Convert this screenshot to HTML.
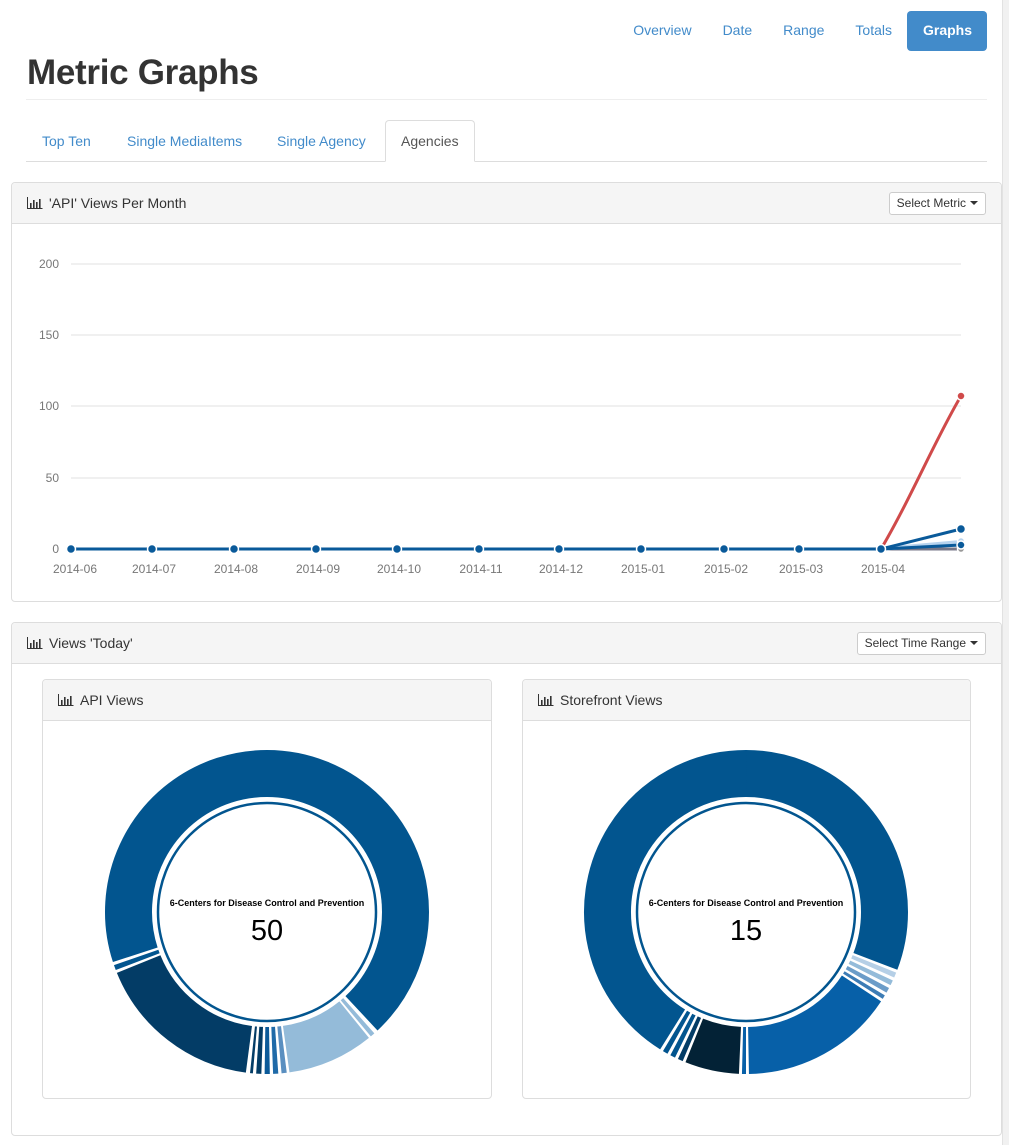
<!DOCTYPE html>
<html><head><meta charset="utf-8">
<style>
*{box-sizing:border-box}
body{margin:0;width:1009px;height:1145px;overflow:hidden;background:#fff;font-family:"Liberation Sans",Arial,sans-serif;color:#333;position:relative}
.sb{position:absolute;right:0;top:0;width:7px;height:1145px;background:#f1f1f1;border-left:1px solid #e2e2e2}
.nav{position:absolute;top:11px;right:22px;display:flex;font-size:14px}
.nav a{display:block;padding:11px 15px 11px 16px;color:#428bca;text-decoration:none;border-radius:4px;height:40px}
.nav a.act{background:#428bca;color:#fff;font-weight:bold}
h1{position:absolute;left:27px;top:53px;margin:0;font-size:35px;font-weight:bold;color:#333;letter-spacing:-0.3px}
.hr{position:absolute;left:26px;right:22px;top:99px;border-top:1px solid #eee}
.tabs{position:absolute;left:26px;right:22px;top:120px;height:42px;border-bottom:1px solid #ddd;font-size:14px}
.tabs a{position:absolute;top:0;height:42px;line-height:42px;color:#428bca;padding:0 15px;text-decoration:none}
.tabs a.act{color:#555;background:#fff;border:1px solid #ddd;border-bottom-color:#fff;border-radius:4px 4px 0 0;height:42px;line-height:40px}
.panel{position:absolute;border:1px solid #ddd;border-radius:4px;background:#fff}
.ph{background:#f5f5f5;border-bottom:1px solid #ddd;height:41px;padding:0 15px;font-size:14px;line-height:40px;border-radius:4px 4px 0 0;position:relative}
.ic{display:inline-block;vertical-align:-1px;margin-right:6px}
.btn{position:absolute;right:15px;top:9px;height:23px;border:1px solid #ccc;border-radius:3px;background:#fff;font-size:12px;line-height:21px;padding:0 7px;color:#333}
.caret{display:inline-block;border-left:4px solid transparent;border-right:4px solid transparent;border-top:4px solid #333;vertical-align:2px;margin-left:4px}
</style></head><body>
<div class="sb"></div>
<div class="nav"><a>Overview</a><a>Date</a><a>Range</a><a>Totals</a><a class="act">Graphs</a></div>
<h1>Metric Graphs</h1>
<div class="hr"></div>
<div class="tabs">
<a style="left:1px">Top Ten</a><a style="left:86px">Single MediaItems</a><a style="left:236px">Single Agency</a><a class="act" style="left:359px">Agencies</a>
</div>

<svg width="0" height="0" style="position:absolute"><defs><symbol id="bar" viewBox="0 0 16 12"><path d="M0.5 0v11.5H15.5" stroke="#333" fill="none"/><rect x="3" y="6" width="1.6" height="5" fill="#333"/><rect x="6" y="3" width="1.6" height="8" fill="#333"/><rect x="9" y="5" width="1.6" height="6" fill="#333"/><rect x="12" y="2" width="1.6" height="9" fill="#333"/></symbol></defs></svg>

<div class="panel" style="left:11px;top:182px;width:991px;height:420px">
<div class="ph"><svg class="ic" width="16" height="12"><use href="#bar"/></svg>'API' Views Per Month<span class="btn">Select Metric<span class="caret"></span></span></div>
</div>
<svg style="position:absolute;left:0;top:0" width="1009" height="610" font-family="Liberation Sans,Arial,sans-serif" font-size="12" fill="#777">
<g stroke="#e2e2e2" stroke-width="1"><line x1="71" x2="961" y1="264" y2="264"/><line x1="71" x2="961" y1="335" y2="335"/><line x1="71" x2="961" y1="406" y2="406"/><line x1="71" x2="961" y1="478" y2="478"/></g>
<g text-anchor="end"><text x="59" y="268">200</text><text x="59" y="339">150</text><text x="59" y="410">100</text><text x="59" y="482">50</text><text x="59" y="553">0</text></g>
<g text-anchor="middle"><text x="75" y="573">2014-06</text><text x="154" y="573">2014-07</text><text x="236" y="573">2014-08</text><text x="318" y="573">2014-09</text><text x="399" y="573">2014-10</text><text x="481" y="573">2014-11</text><text x="561" y="573">2014-12</text><text x="643" y="573">2015-01</text><text x="726" y="573">2015-02</text><text x="801" y="573">2015-03</text><text x="883" y="573">2015-04</text></g>
<path d="M881 549 L961 549" stroke="#778" stroke-width="3"/>
<path d="M881 549 L961 542" stroke="#b7d3ee" stroke-width="4"/>
<path d="M881 549 L961 545" stroke="#0a5a9a" stroke-width="3"/>
<path d="M881 549 C910 500 935 440 961 396" stroke="#d04a4a" stroke-width="3" fill="none"/>
<path d="M881 549 L961 529" stroke="#0a5a9a" stroke-width="3"/>
<line x1="71" x2="881" y1="549" y2="549" stroke="#0a5a9a" stroke-width="3"/>
<g fill="#0a5a9a" stroke="#fff" stroke-width="1.5"><circle cx="71" cy="549" r="4.5"/><circle cx="152" cy="549" r="4.5"/><circle cx="234" cy="549" r="4.5"/><circle cx="316" cy="549" r="4.5"/><circle cx="397" cy="549" r="4.5"/><circle cx="479" cy="549" r="4.5"/><circle cx="559" cy="549" r="4.5"/><circle cx="641" cy="549" r="4.5"/><circle cx="724" cy="549" r="4.5"/><circle cx="799" cy="549" r="4.5"/><circle cx="881" cy="549" r="4.5"/>
<circle cx="961" cy="549" r="3.5" fill="#999"/><circle cx="961" cy="541" r="3.5" fill="#b7d3ee"/><circle cx="961" cy="545" r="4" /><circle cx="961" cy="529" r="4.5"/><circle cx="961" cy="396" r="4" fill="#d04a4a"/></g>
</svg>

<div class="panel" style="left:11px;top:622px;width:991px;height:514px">
<div class="ph"><svg class="ic" width="16" height="12"><use href="#bar"/></svg>Views 'Today'<span class="btn">Select Time Range<span class="caret"></span></span></div>
</div>
<div class="panel" style="left:42px;top:679px;width:450px;height:420px"><div class="ph" style="height:41px"><svg class="ic" width="16" height="12"><use href="#bar"/></svg>API Views</div></div>
<div class="panel" style="left:522px;top:679px;width:449px;height:420px"><div class="ph" style="height:41px"><svg class="ic" width="16" height="12"><use href="#bar"/></svg>Storefront Views</div></div>

<svg style="position:absolute;left:0;top:0" width="1009" height="1145" font-family="Liberation Sans,Arial,sans-serif">
<g transform="translate(267,912)" fill="none" stroke-width="47">
<circle r="138.5" stroke="#02558f" stroke-dasharray="331 2000" transform="rotate(-90)"/>
<circle r="138.5" stroke="#94bbd9" stroke-dasharray="4 2000" transform="rotate(48.5)"/>
<circle r="138.5" stroke="#94bbd9" stroke-dasharray="75 2000" transform="rotate(51)"/>
<circle r="138.5" stroke="#5a8fc0" stroke-dasharray="4.5 2000" transform="rotate(83)"/>
<circle r="138.5" stroke="#1f6aa8" stroke-dasharray="4.5 2000" transform="rotate(86)"/>
<circle r="138.5" stroke="#0b5a99" stroke-dasharray="4.5 2000" transform="rotate(89)"/>
<circle r="138.5" stroke="#033c66" stroke-dasharray="4.5 2000" transform="rotate(92)"/>
<circle r="138.5" stroke="#033c66" stroke-dasharray="2.5 2000" transform="rotate(95)"/>
<circle r="138.5" stroke="#033c66" stroke-dasharray="146 2000" transform="rotate(97.5)"/>
<circle r="138.5" stroke="#02558f" stroke-dasharray="4.5 2000" transform="rotate(159)"/>
<circle r="138.5" stroke="#02558f" stroke-dasharray="261 2000" transform="rotate(162)"/>
<circle r="109" stroke="#02558f" stroke-width="2.5"/>
<text x="0" y="-6" text-anchor="middle" font-size="9" font-weight="bold" fill="#000" stroke="none">6-Centers for Disease Control and Prevention</text>
<text x="0" y="28" text-anchor="middle" font-size="29" fill="#000" stroke="none">50</text>
</g>
<g transform="translate(746,912)" fill="none" stroke-width="47">
<circle r="138.5" stroke="#02558f" stroke-dasharray="268 2000" transform="rotate(-90)"/>
<circle r="138.5" stroke="#b5cfe6" stroke-dasharray="4.5 2000" transform="rotate(22)"/>
<circle r="138.5" stroke="#94bbd9" stroke-dasharray="4.5 2000" transform="rotate(25)"/>
<circle r="138.5" stroke="#6b9cc8" stroke-dasharray="4.5 2000" transform="rotate(28)"/>
<circle r="138.5" stroke="#3d7cb5" stroke-dasharray="3.5 2000" transform="rotate(31)"/>
<circle r="138.5" stroke="#0760a8" stroke-dasharray="134 2000" transform="rotate(33.5)"/>
<circle r="138.5" stroke="#0760a8" stroke-dasharray="3.5 2000" transform="rotate(90)"/>
<circle r="138.5" stroke="#032236" stroke-dasharray="47 2000" transform="rotate(92.5)"/>
<circle r="138.5" stroke="#033c66" stroke-dasharray="4.5 2000" transform="rotate(113)"/>
<circle r="138.5" stroke="#02558f" stroke-dasharray="4.5 2000" transform="rotate(116)"/>
<circle r="138.5" stroke="#02558f" stroke-dasharray="4.5 2000" transform="rotate(119)"/>
<circle r="138.5" stroke="#02558f" stroke-dasharray="358 2000" transform="rotate(122)"/>
<circle r="109" stroke="#02558f" stroke-width="2.5"/>
<text x="0" y="-6" text-anchor="middle" font-size="9" font-weight="bold" fill="#000" stroke="none">6-Centers for Disease Control and Prevention</text>
<text x="0" y="28" text-anchor="middle" font-size="29" fill="#000" stroke="none">15</text>
</g>
</svg>
</body></html>
